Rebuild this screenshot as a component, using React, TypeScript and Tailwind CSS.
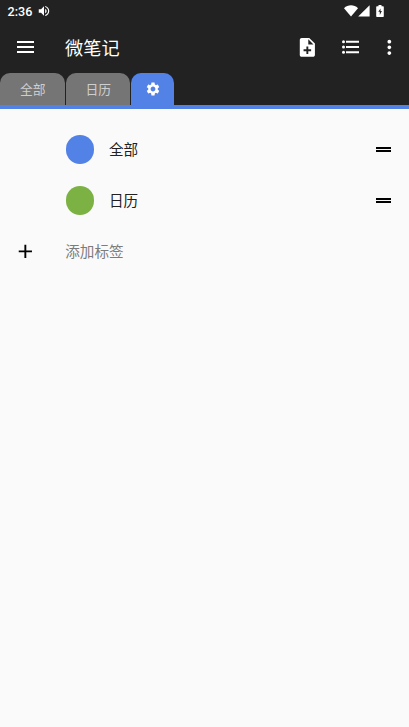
import { MdAdd, MdMoreVert, MdNoteAdd, MdSettings, MdVolumeUp } from 'react-icons/md';

interface Tag {
  id: string;
  name: string;
  color: string;
}

const tags: Tag[] = [
  { id: 'all', name: '全部', color: 'bg-[#5382e6]' },
  { id: 'calendar', name: '日历', color: 'bg-[#7cb243]' },
];

function MenuIcon() {
  return (
    <svg viewBox="0 0 17 12" className="h-3 w-[17px]" fill="currentColor">
      <path d="M0 0h17v2H0zM0 5h17v2H0zM0 10h17v2H0z" />
    </svg>
  );
}

function ListIcon() {
  return (
    <svg viewBox="0 0 17 14" className="h-3.5 w-[17px]" fill="currentColor">
      <circle cx="1.5" cy="1.7" r="1.5" />
      <circle cx="1.5" cy="7" r="1.5" />
      <circle cx="1.5" cy="12.3" r="1.5" />
      <path d="M4 .8h13v1.9H4zM4 6h13v2H4zM4 11.3h13v1.9H4z" />
    </svg>
  );
}

function DragIcon() {
  return (
    <svg viewBox="0 0 15 5" className="h-[5px] w-[15px]" fill="currentColor">
      <path d="M0 0h15v1.9H0zM0 3.1h15V5H0z" />
    </svg>
  );
}

function StatusBar() {
  return (
    <div className="flex h-[22px] items-center pl-[7.5px] pr-[25px] text-white">
      <span className="pt-px font-['Roboto',sans-serif] text-[12.6px] font-medium leading-[14px]">2:36</span>
      <MdVolumeUp className="ml-[5px] size-[14px]" />
      <div className="ml-auto flex items-center">
        <svg viewBox="0 0 14 12" className="h-3 w-3.5" fill="currentColor">
          <path d="M0 3.2C4-.6 10-.6 14 3.2L7 11.6z" />
        </svg>
        <svg viewBox="0 0 12 12" className="h-3 w-3" fill="currentColor">
          <path d="M11.6.2v11.4H.2z" />
        </svg>
        <svg viewBox="0 0 8 12" className="ml-[6px] h-3 w-2" fill="currentColor">
          <path d="M2.5 0h3v1.2H7a.8.8 0 0 1 .8.8v9.2a.8.8 0 0 1-.8.8H1a.8.8 0 0 1-.8-.8V2a.8.8 0 0 1 .8-.8h1.5z" />
          <path d="M4.5 3.4L2.3 6.8h1.5v3.1L5.9 6H4.5z" fill="#222" />
        </svg>
      </div>
    </div>
  );
}

function Toolbar() {
  return (
    <header className="flex h-[51px] items-center pl-[17px] pr-[8.5px] text-white">
      <button className="-mt-px">
        <MenuIcon />
      </button>
      <h1 className="ml-[31px] text-[18.2px] leading-none">微笔记</h1>
      <div className="ml-auto flex items-center">
        <MdNoteAdd className="size-[22.7px]" />
        <span className="-mt-px ml-[23.3px] mr-[19px]">
          <ListIcon />
        </span>
        <MdMoreVert className="size-[22.7px]" />
      </div>
    </header>
  );
}

function TabBar() {
  return (
    <nav className="flex h-9 gap-px border-b-4 border-[#5382e6]">
      {tags.map((tag) => (
        <button
          key={tag.id}
          className="flex w-[64.5px] items-center justify-center rounded-t-[10px] bg-[#757575] pl-px text-[12.8px] leading-none text-[#cecece]"
        >
          {tag.name}
        </button>
      ))}
      <button className="flex w-[43px] items-center justify-center rounded-t-[10px] bg-[#5382e6] text-white">
        <MdSettings className="size-4" />
      </button>
    </nav>
  );
}

function TagRow({ tag }: { tag: Tag }) {
  return (
    <li className="flex h-[51px] items-center pl-[65.5px] pr-[18px]">
      <span className={`size-[28.5px] rounded-full ${tag.color}`} />
      <span className="ml-[15px] text-[14.6px] leading-none text-[#212121]">{tag.name}</span>
      <span className="ml-auto text-black">
        <DragIcon />
      </span>
    </li>
  );
}

export default function App() {
  return (
    <div className="flex h-screen flex-col bg-[#fafafa] font-['Noto_Sans_CJK_SC',sans-serif]">
      <div className="bg-[#222]">
        <StatusBar />
        <Toolbar />
        <TabBar />
      </div>
      <ul className="pt-[15px]">
        {tags.map((tag) => (
          <TagRow key={tag.id} tag={tag} />
        ))}
        <li className="flex h-[51px] items-center pl-3.5">
          <MdAdd className="size-[22.7px] text-black" />
          <span className="ml-[28.5px] text-[14.6px] leading-none text-[#7c7c7c]">添加标签</span>
        </li>
      </ul>
    </div>
  );
}
